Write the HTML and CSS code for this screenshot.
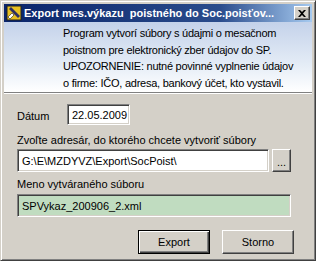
FILE: index.html
```html
<!DOCTYPE html>
<html lang="sk">
<head>
    <meta charset="UTF-8">
    <title>Export mes.výkazu</title>
    <link rel="stylesheet" href="styles.css">
</head>
<body>
    <div class="window">
        <div class="titlebar">
            <svg class="app-icon" width="16" height="16" viewBox="0 0 16 16">
                <rect x="1" y="1" width="14" height="14" fill="#e8c020" stroke="#202020"/>
                <path d="M3 4 L12 13 L14 11 L5 2 Z" fill="#303060"/>
                <path d="M2 12 L6 8 L8 10 L4 14 Z" fill="#ffffff" stroke="#202020" stroke-width="0.6"/>
            </svg>
            <span class="title">Export mes.výkazu&nbsp; poistného do Soc.poisťov...</span>
            <div class="close-btn">
                <svg width="8" height="7" viewBox="0 0 8 7">
                    <path d="M0 0 L2 0 L4 2 L6 0 L8 0 L5 3.5 L8 7 L6 7 L4 5 L2 7 L0 7 L3 3.5 Z" fill="#000"/>
                </svg>
            </div>
        </div>
        <div class="info">
            <p>Program vytvorí súbory s údajmi o mesačnom<br>
            poistnom pre elektronický zber údajov do SP.<br>
            UPOZORNENIE: nutné povinné vyplnenie údajov<br>
            o firme: IČO, adresa, bankový účet, kto vystavil.</p>
        </div>
        <div class="content">
            <div class="date-row">
                <span class="label">Dátum</span>
                <div class="field date-field">22.05.2009</div>
            </div>
            <div class="label">Zvoľte adresár, do ktorého chcete vytvoriť súbory</div>
            <div class="path-row">
                <div class="field path-field">G:\E\MZDYVZ\Export\SocPoist\</div>
                <div class="btn browse-btn">...</div>
            </div>
            <div class="label">Meno vytváraného súboru</div>
            <div class="field file-field">SPVykaz_200906_2.xml</div>
            <div class="buttons">
                <div class="btn default-btn">Export</div>
                <div class="btn">Storno</div>
            </div>
        </div>
    </div>
</body>
</html>
```

FILE: styles.css
```css
* {
    margin: 0;
    padding: 0;
    box-sizing: border-box;
}

body {
    font-family: "Liberation Sans", Arial, sans-serif;
    font-size: 11px;
    background-color: #d4d0c8;
    width: 316px;
    height: 261px;
    overflow: hidden;
}

.window {
    width: 316px;
    height: 261px;
    background-color: #d4d0c8;
    border: 1px solid;
    border-color: #d4d0c8 #404040 #404040 #d4d0c8;
    box-shadow: inset 1px 1px 0 #ffffff, inset -1px -1px 0 #808080;
    padding: 3px;
    display: flex;
    flex-direction: column;
}

.titlebar {
    height: 18px;
    background: linear-gradient(to right, #0a246a 0%, #2a4c8c 70%, #a6caf0 100%);
    display: flex;
    align-items: center;
    padding-left: 2px;
    padding-right: 2px;
}

.app-icon {
    flex: none;
    margin-right: 2px;
}

.title {
    color: #ffffff;
    font-weight: bold;
    font-size: 11px;
    white-space: nowrap;
    flex: 1;
    overflow: hidden;
}

.close-btn {
    width: 16px;
    height: 14px;
    background-color: #d4d0c8;
    border: 1px solid;
    border-color: #ffffff #404040 #404040 #ffffff;
    box-shadow: inset -1px -1px 0 #808080;
    display: flex;
    align-items: center;
    justify-content: center;
    flex: none;
}

.info {
    height: 71px;
    background: linear-gradient(to bottom, #c4d2ea 0%, #e4ecf6 60%, #ffffff 100%);
    border-bottom: 1px solid #808080;
    box-shadow: 0 1px 0 #ffffff;
    padding: 3px 0 0 59px;
}

.info p {
    line-height: 16.5px;
    color: #000000;
    white-space: nowrap;
    letter-spacing: -0.25px;
}

.content {
    padding: 11px 0 0 13px;
}

.date-row {
    display: flex;
    align-items: center;
    margin-bottom: 8px;
}

.date-row .label {
    width: 50px;
    margin-top: 2px;
}

.label {
    color: #000000;
    line-height: 14px;
}

.field {
    background-color: #ffffff;
    border: 1px solid;
    border-color: #808080 #ffffff #ffffff #808080;
    box-shadow: inset 1px 1px 0 #404040, inset -1px -1px 0 #d4d0c8;
    padding: 1px 4px 0;
    line-height: 18px;
    height: 21px;
    white-space: nowrap;
}

.date-field {
    width: 63px;
}

.path-row {
    display: flex;
    gap: 3px;
    margin-top: 2px;
    margin-bottom: 5px;
}

.path-field {
    width: 252px;
    height: 23px;
    padding-top: 2px;
}

.btn {
    background-color: #d4d0c8;
    border: 1px solid;
    border-color: #ffffff #404040 #404040 #ffffff;
    box-shadow: inset -1px -1px 0 #808080;
    display: flex;
    align-items: center;
    justify-content: center;
    color: #000000;
}

.browse-btn {
    width: 19px;
    height: 23px;
    padding-top: 2px;
}

.file-field {
    width: 274px;
    height: 23px;
    margin-top: 3px;
    background-color: #c0dcc0;
    padding-top: 2px;
}

.buttons {
    display: flex;
    justify-content: flex-end;
    gap: 12px;
    margin-top: 13px;
    padding-right: 18px;
}

.buttons .btn {
    width: 72px;
    height: 24px;
}

.default-btn {
    border: 1px solid #000000;
    box-shadow: inset 1px 1px 0 #ffffff, inset -1px -1px 0 #404040, inset -2px -2px 0 #808080;
}
```
